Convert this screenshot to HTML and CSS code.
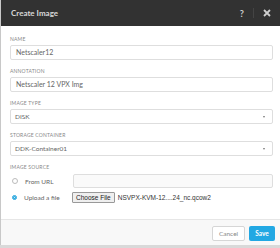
FILE: index.html
```html
<!DOCTYPE html>
<html lang="en">
<head>
    <meta charset="UTF-8">
    <meta name="viewport" content="width=device-width, initial-scale=1.0">
    <title>Create Image</title>
    <link rel="stylesheet" href="styles.css">
</head>
<body>

    <!-- Modal dialog -->
    <div class="dialog">
        <div class="dialog-header">
            <span class="dialog-title">Create Image</span>
            <div class="header-actions">
                <span class="help">?</span>
                <span class="divider"></span>
                <svg class="close" width="8" height="8" viewBox="0 0 8 8">
                    <path d="M1 1 L7 7 M7 1 L1 7" stroke="#cfcfcf" stroke-width="1.8"/>
                </svg>
            </div>
        </div>

        <div class="dialog-body">
            <div class="field">
                <label>NAME</label>
                <div class="input">Netscaler12</div>
            </div>
            <div class="field">
                <label>ANNOTATION</label>
                <div class="input">Netscaler 12 VPX Img</div>
            </div>
            <div class="field">
                <label>IMAGE TYPE</label>
                <div class="input select">DISK <span class="caret"></span></div>
            </div>
            <div class="field">
                <label>STORAGE CONTAINER</label>
                <div class="input select">DDK-Container01 <span class="caret"></span></div>
            </div>
            <div class="field">
                <label>IMAGE SOURCE</label>
                <div class="source-row">
                    <span class="radio"></span>
                    <span class="source-label">From URL</span>
                    <div class="input url"></div>
                </div>
                <div class="source-row upload">
                    <span class="radio checked"></span>
                    <span class="source-label">Upload a file</span>
                    <span class="file-button">Choose File</span>
                    <span class="file-name">NSVPX-KVM-12....24_nc.qcow2</span>
                </div>
            </div>
        </div>

        <div class="dialog-footer">
            <button class="btn cancel">Cancel</button>
            <button class="btn save">Save</button>
        </div>
    </div>

</body>
</html>
```

FILE: styles.css
```css
/* Global Styles */
body {
    margin: 0;
    background-color: #d9d9d9;
    font-family: Lato, 'Open Sans', Arial, sans-serif;
    color: #444;
}

/* Dialog */
.dialog {
    width: 279px;
    height: 245px;
    background-color: white;
    border-left: 1px solid #c8c8c8;
    display: flex;
    flex-direction: column;
}

.dialog-header {
    height: 26px;
    background-color: #323232;
    display: flex;
    align-items: center;
    justify-content: space-between;
    padding: 0 9px 0 10px;
    flex-shrink: 0;
}

.dialog-title {
    font-size: 8px;
    font-weight: bold;
    color: #d8d8d8;
}

.header-actions {
    display: flex;
    align-items: center;
    gap: 9px;
}

.help {
    font-size: 9px;
    font-weight: bold;
    color: #cfcfcf;
}

.divider {
    width: 1px;
    height: 10px;
    background-color: #444;
}

/* Form */
.dialog-body {
    flex: 1;
    padding: 10px 7px 0 9px;
}

.field {
    margin-bottom: 8px;
}

label {
    display: block;
    font-size: 5px;
    letter-spacing: 0.2px;
    color: #888;
    line-height: 6px;
    margin-bottom: 3px;
}

.input {
    height: 13px;
    border: 1px solid #dedede;
    border-radius: 2px;
    font-size: 7px;
    line-height: 13px;
    padding: 0 5px;
    color: #666;
}

.select {
    position: relative;
    padding-left: 4px;
    font-size: 6.5px;
}

.caret {
    position: absolute;
    right: 7px;
    top: 6px;
    border-left: 1.5px solid transparent;
    border-right: 1.5px solid transparent;
    border-top: 2px solid #777;
}

/* Image source rows */
.source-row {
    display: flex;
    align-items: center;
    margin-top: 4px;
    padding-left: 2px;
}

.radio {
    width: 4px;
    height: 4px;
    border: 1px solid #bbb;
    border-radius: 50%;
    margin-right: 7px;
}

.radio.checked {
    width: 3px;
    height: 3px;
    border: 1.5px solid #22a4dd;
    background-color: white;
    box-shadow: inset 0 0 0 1px #22a4dd;
}

.source-label {
    font-size: 6.5px;
    color: #666;
    width: 48px;
}

.input.url {
    flex: 1;
    height: 12px;
    background-color: #fafafa;
}

.file-button {
    font-family: Arial, 'Liberation Sans', sans-serif;
    font-size: 6.5px;
    color: #222;
    background-color: #efefef;
    border: 1px solid #999;
    border-radius: 1px;
    padding: 1px 3px;
    margin-right: 3px;
}

.file-name {
    font-family: Arial, 'Liberation Sans', sans-serif;
    font-size: 6.5px;
    color: #333;
}

/* Footer */
.dialog-footer {
    height: 26px;
    border-top: 1px solid #e6e6e6;
    background-color: #f8f8f8;
    display: flex;
    justify-content: flex-end;
    align-items: center;
    gap: 4px;
    padding: 2px 5px 0 0;
    box-sizing: border-box;
    flex-shrink: 0;
}

.btn {
    height: 15px;
    font-family: Lato, 'Open Sans', Arial, sans-serif;
    font-size: 6.5px;
    border-radius: 2px;
    padding: 0;
    cursor: pointer;
}

.cancel {
    width: 33px;
    background-color: white;
    border: 1px solid #d6d6d6;
    color: #888;
}

.save {
    width: 26px;
    background-color: #22a8e3;
    border: none;
    color: white;
    font-weight: bold;
}
```
